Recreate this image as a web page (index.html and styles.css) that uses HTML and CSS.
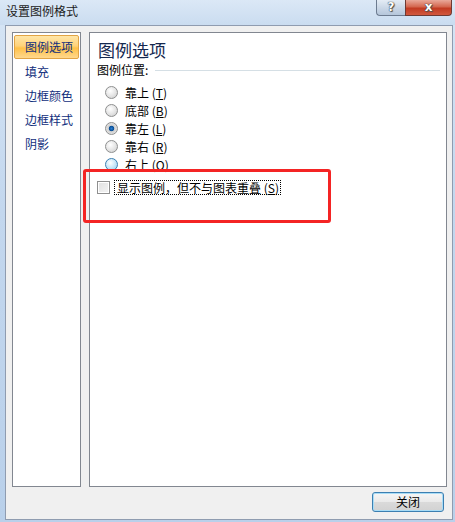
FILE: index.html
```html
<!DOCTYPE html>
<html lang="zh-CN">
<head>
    <meta charset="UTF-8">
    <title>设置图例格式</title>
    <link rel="stylesheet" href="styles.css">
</head>
<body>
    <div class="window">
        <!-- 标题栏 -->
        <div class="titlebar">
            <div class="title">设置图例格式</div>
            <div class="controls">
                <div class="btn-help">?</div>
                <div class="btn-close">x</div>
            </div>
        </div>

        <!-- 客户区 -->
        <div class="client">
            <div class="panels">
                <ul class="nav">
                    <li class="active">图例选项</li>
                    <li>填充</li>
                    <li>边框颜色</li>
                    <li>边框样式</li>
                    <li>阴影</li>
                </ul>

                <div class="content">
                    <div class="heading">图例选项</div>
                    <div class="group-label">
                        <span>图例位置:</span>
                        <span class="rule"></span>
                    </div>
                    <div class="radios">
                        <div class="radio-row"><span class="radio"></span>靠上 (<u>T</u>)</div>
                        <div class="radio-row"><span class="radio"></span>底部 (<u>B</u>)</div>
                        <div class="radio-row"><span class="radio checked"></span>靠左 (<u>L</u>)</div>
                        <div class="radio-row"><span class="radio"></span>靠右 (<u>R</u>)</div>
                        <div class="radio-row"><span class="radio hover"></span>右上 (<u>O</u>)</div>
                    </div>
                    <div class="check-row">
                        <span class="checkbox"></span>
                        <span class="focus">显示图例，但不与图表重叠 (<u>S</u>)</span>
                    </div>
                </div>
            </div>

            <div class="footer">
                <div class="button">关闭</div>
            </div>
        </div>
    </div>

    <!-- 红色标注框 -->
    <div class="mark"></div>
</body>
</html>
```

FILE: styles.css
```css
body {
    margin: 0;
    padding: 0;
    width: 455px;
    height: 522px;
    overflow: hidden;
    position: relative;
    font-family: "Noto Sans CJK SC", "Liberation Sans", sans-serif;
    font-size: 12px;
    color: #000;
    background: linear-gradient(180deg, #d6e5f5 0%, #c3d7ee 40%, #b9d0ea 100%);
}

.window {
    display: flex;
    flex-direction: column;
    height: 522px;
}

.titlebar {
    height: 25px;
    display: flex;
    justify-content: space-between;
    align-items: flex-start;
    background: linear-gradient(180deg, #dbe8f6 0%, #cadcf0 100%);
}

.title {
    padding: 3px 0 0 6px;
    line-height: 16px;
    color: #1c1c1c;
}

.controls {
    display: flex;
    margin-right: 3px;
}

.btn-help,
.btn-close {
    height: 15px;
    line-height: 15px;
    text-align: center;
    font-family: "DejaVu Sans", sans-serif;
    font-weight: bold;
    font-size: 12px;
    color: #fff;
    text-shadow: 0 0 1px #333, 0 0 1px #333, 1px 1px 1px #555;
}

.btn-help {
    width: 28px;
    border: 1px solid #6c7b90;
    border-top: none;
    border-right: none;
    border-bottom-left-radius: 4px;
    background: linear-gradient(180deg, #e4ecf5 0%, #cbd8e7 50%, #b5c6db 100%);
}

.btn-close {
    width: 45px;
    border: 1px solid #6e3a33;
    border-top: none;
    border-bottom-right-radius: 4px;
    background: linear-gradient(180deg, #e9a99a 0%, #d4674f 45%, #c23b22 55%, #d1583e 100%);
}

.client {
    height: 495px;
    box-sizing: border-box;
    margin: 0 2px 0 5px;
    border: 1px solid #8f9cb0;
    background: #f0f0f0;
    padding: 6px 5px 7px 6px;
    display: flex;
    flex-direction: column;
}

.panels {
    display: flex;
    gap: 8px;
    height: 455px;
}

.nav {
    list-style: none;
    margin: 0;
    padding: 1px;
    width: 69px;
    box-sizing: border-box;
    background: #fff;
    border: 1px solid #828790;
}

.nav li {
    height: 24px;
    line-height: 24px;
    padding-left: 11px;
    color: #102e7c;
}

.nav li.active {
    height: 22px;
    line-height: 22px;
    padding-left: 10px;
    margin-top: 1px;
    margin-bottom: 1px;
    border: 1px solid #e2a444;
    border-radius: 2px;
    background: linear-gradient(180deg, #ffe6a8 0%, #ffd27a 45%, #ffc148 55%, #ffd88e 100%);
}

.content {
    width: 358px;
    box-sizing: border-box;
    background: #fff;
    border: 1px solid #828790;
    padding: 6px 6px 0 7px;
}

.heading {
    font-size: 17px;
    line-height: 22px;
    color: #14284f;
    padding-left: 1px;
}

.group-label {
    display: flex;
    align-items: center;
    height: 16px;
    line-height: 16px;
    margin-top: 1px;
}

.rule {
    flex: 1;
    height: 1px;
    margin-left: 7px;
    background: #d5dfe5;
}

.radios {
    margin-top: 5px;
    padding-left: 8px;
}

.radio-row {
    height: 18px;
    display: flex;
    align-items: center;
}

.radio {
    width: 11px;
    height: 11px;
    border-radius: 50%;
    border: 1px solid #8e8f8f;
    margin-right: 7px;
    background: radial-gradient(circle at 40% 35%, #ffffff 0%, #e6e6e6 50%, #c9c9c9 100%);
}

.radio.checked {
    background: radial-gradient(circle, #2a7fd4 0%, #0b4f95 30%, #d0d0d0 40%, #f2f2f2 100%);
}

.radio.hover {
    border-color: #3c7fb1;
    background: radial-gradient(circle at 40% 35%, #ffffff 0%, #c8e7f9 50%, #8fcdf2 100%);
}

.check-row {
    margin-top: 5px;
    height: 18px;
    display: flex;
    align-items: center;
}

.checkbox {
    width: 11px;
    height: 11px;
    border: 1px solid #8f8f8f;
    background: linear-gradient(135deg, #e0e0e0 0%, #f4f4f4 100%);
    box-shadow: inset 0 0 0 1px #fff;
    margin-right: 4px;
}

.focus {
    border: 1px dotted #000;
    padding: 0 1px 0 2px;
    line-height: 13px;
}

.footer {
    display: flex;
    justify-content: flex-end;
    margin-top: 5px;
    padding-right: 3px;
}

.button {
    width: 70px;
    height: 18px;
    line-height: 18px;
    text-align: center;
    border: 1px solid #3c7fb1;
    border-radius: 3px;
    background: linear-gradient(180deg, #f6f6f6 0%, #e9e9e9 50%, #dadada 51%, #d2d2d2 100%);
    box-shadow: inset 0 0 0 1px #a8dcf6;
}

.mark {
    position: absolute;
    left: 83px;
    top: 169px;
    width: 242px;
    height: 48px;
    border: 3px solid #f42424;
    border-radius: 3px;
}
```
